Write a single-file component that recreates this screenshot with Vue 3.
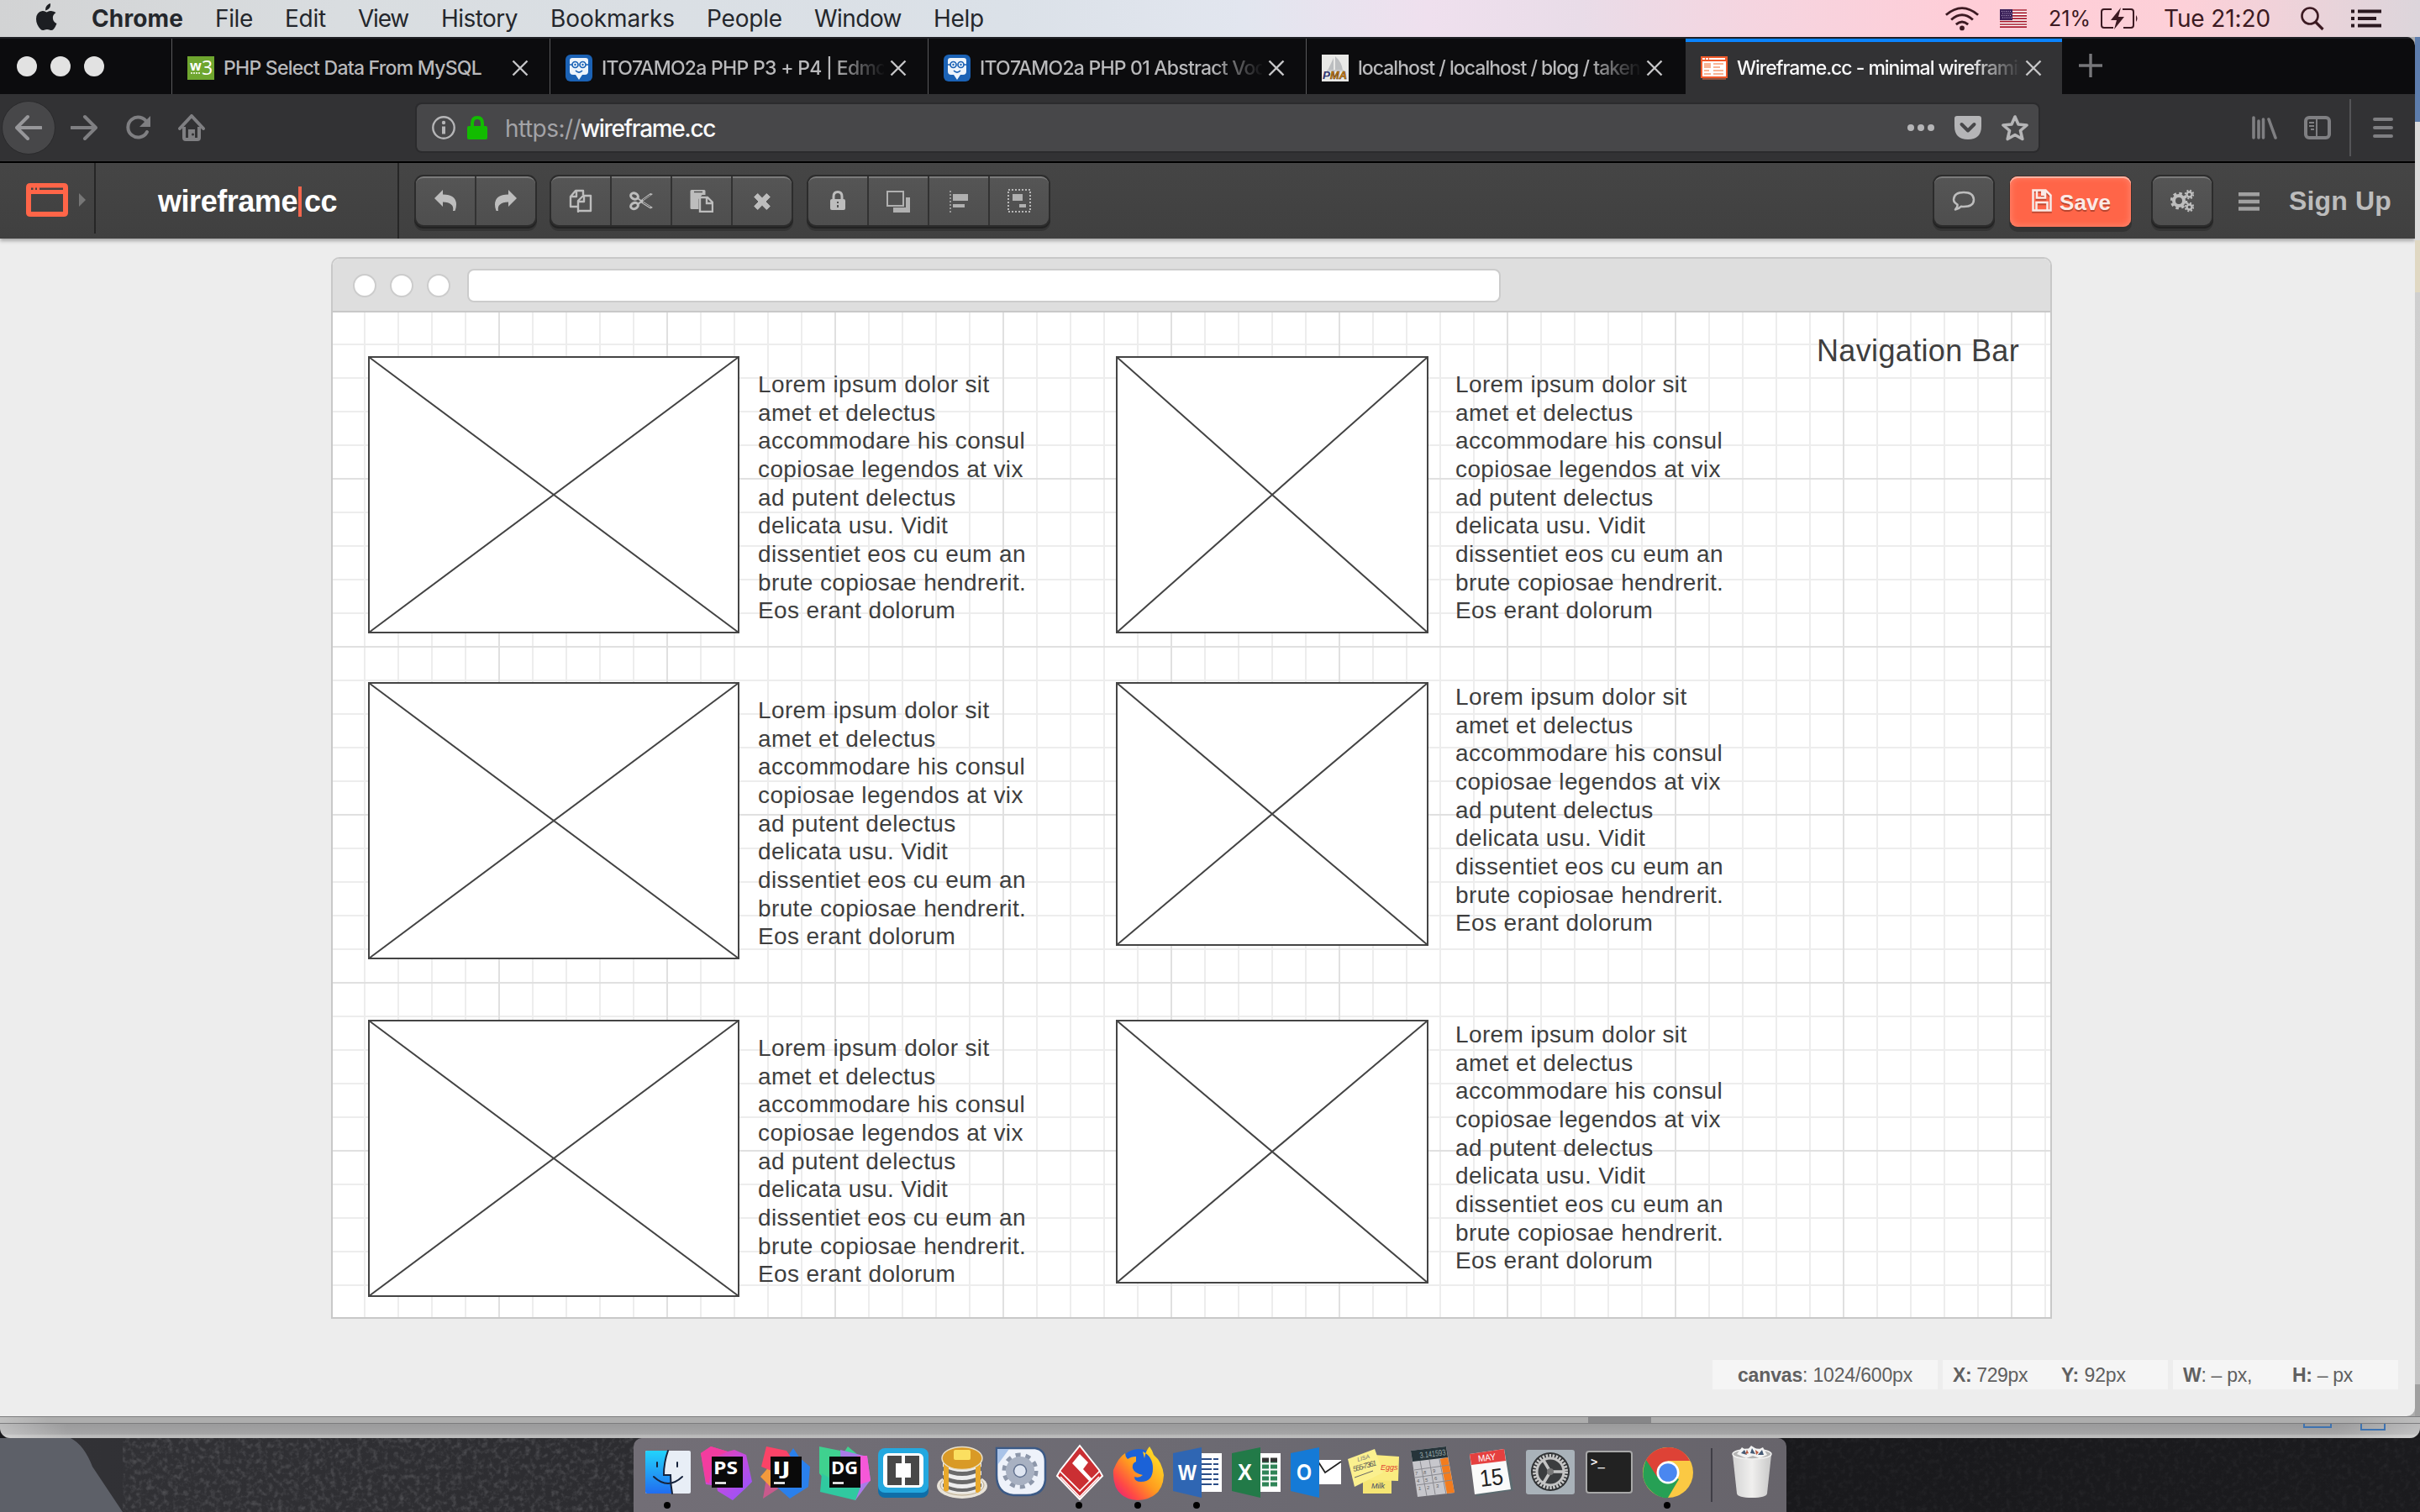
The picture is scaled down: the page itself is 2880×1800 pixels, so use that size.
<script setup>
const spread = (el, target) => {
  el.style.letterSpacing = '0px'
  const natural = el.getBoundingClientRect().width
  const n = el.textContent.length
  if (n && target) el.style.letterSpacing = ((target - natural) / n).toFixed(3) + 'px'
}
const vFit = { mounted: (el, b) => spread(el, b.value) }

const menus = [
  { t: 'File', x: 256, w: 45 }, { t: 'Edit', x: 339, w: 49 }, { t: 'View', x: 426, w: 60 },
  { t: 'History', x: 525, w: 91 }, { t: 'Bookmarks', x: 655, w: 148 }, { t: 'People', x: 841, w: 90 },
  { t: 'Window', x: 969, w: 104 }, { t: 'Help', x: 1111, w: 60 },
].map((m, i, a) => ({ ...m, cell: (a[i + 1]?.x ?? m.x + m.w) - m.x }))

const edmodo = `<rect width="32" height="32" rx="6" fill="#1b62b5"/><path d="M5 7q0-3 3-3h16q3 0 3 3v13q0 4-4 4h-3l-4 6-4-6H9q-4 0-4-4z" fill="#eef4fb"/><g fill="none" stroke="#1b62b5" stroke-width="1.700"><circle cx="11.500" cy="12" r="3.500"/><circle cx="20.500" cy="12" r="3.500"/><path d="M2 12h6M24 12h6M12 19q4 4 8 0"/></g><circle cx="11.500" cy="12" r="1.200" fill="#1b62b5"/><circle cx="20.500" cy="12" r="1.200" fill="#1b62b5"/>`
const tabs = [
  { title: 'PHP Select Data From MySQL', w: 307, icon: `<rect y="2" width="32" height="28" fill="#6fa62f"/><text x="3" y="19" font-family="Open Sans,sans-serif" font-weight="700" font-size="16" fill="#fff">w</text><text x="17" y="24" font-family="Open Sans,sans-serif" font-size="23" fill="#fff">3</text><path d="M4 22h12" stroke="#dcebc8" stroke-width="2" stroke-dasharray="2 1"/>` },
  { title: 'ITO7AMO2a PHP P3 + P4 | Edmodo', w: 366, fade: true, icon: edmodo },
  { title: 'ITO7AMO2a PHP 01 Abstract Vocab', w: 366, fade: true, icon: edmodo },
  { title: 'localhost / localhost / blog / taken', w: 336, fade: true, icon: `<rect width="32" height="32" fill="#e8e8e6"/><path d="M14 4L7 19h7zM16 2v17h9q-1-10-9-17z" fill="#bcbec0"/><path d="M6 19h20" stroke="#ccc" stroke-width="2"/><g font-family="Liberation Sans,sans-serif" font-weight="700" font-style="italic" font-size="12"><text x="1" y="29" textLength="9" lengthAdjust="spacingAndGlyphs" fill="#33366e">P</text><text x="10" y="29" textLength="20" lengthAdjust="spacingAndGlyphs" fill="#e08a10" stroke="#503005" stroke-width=".5">MA</text></g>` },
  { title: 'Wireframe.cc - minimal wireframing', w: 360, fade: true, active: true, icon: `<path d="M2 26h28v4H2z" fill="#8d5340"/><rect y="2" width="32" height="26" fill="#f1592a"/><path d="M2 4h3v2H2zM6 4h3v2H6zM10 4h19v2H10zM2 8h28v18H2z" fill="#fff"/><path d="M4 10h8v6H4zM15 10h12v2H15zM15 14h8v2h-8zM4 18h6v2H4zM15 18h12v2H15zM4 22h8v2H4zM15 22h12v2H15z" fill="#f9b495"/>` },
]

const groups = [
  [
    `<path d="M1 11L11 1v5.500q16 0 16 12 0 4-1.500 7.500h-2.500q2-10-12-10.500V21z" fill="#bdbdbd"/>`,
    `<path d="M27 11L17 1v5.500q-16 0-16 12 0 4 1.500 7.500H5q-2-10 12-10.500V21z" fill="#bdbdbd"/>`,
  ],
  [
    `<g fill="none" stroke="#bdbdbd" stroke-width="2.400" stroke-linejoin="round"><path d="M10 21H2V9l6-7h9v5M9 2v7H2"/><path d="M11 27V14l6-6h9v18H11zM18 8v7h-7"/></g>`,
    `<g fill="none" stroke="#bdbdbd" stroke-width="3"><ellipse cx="6" cy="8.500" rx="4.500" ry="3.500" transform="rotate(25 6 8.500)"/><ellipse cx="6" cy="20" rx="4.500" ry="3.500" transform="rotate(-25 6 20)"/></g><path d="M10 10l4 3 11-8 3 1-12 8.500L28 22l-3 1.500-11-7-4 3-1-2 4-3-4-3z" fill="#bdbdbd"/><path d="M16 13l9-6M16 16l9 5.500" stroke="#525252"/>`,
    `<path d="M2 1h15q1.500 0 1.500 1.500V7h-4l-4 5v12H2q-1.500 0-1.500-1.500v-20Q.5 1 2 1z" fill="#bdbdbd"/><path d="M5 3.500h10" stroke="#525252" stroke-width="1.500"/><path d="M12 27V10h9l6 6v11zM20 10v7h7" fill="#525252" stroke="#bdbdbd" stroke-width="2.400"/>`,
    `<path d="M8.700 5.500L14 10.800l5.300-5.300 4 4-5.300 5.500 5.300 5.500-4 4L14 19.200l-5.300 5.300-4-4L10 15 4.700 9.500z" fill="#bdbdbd" stroke="#bdbdbd" stroke-linejoin="round"/>`,
  ],
  [
    `<path d="M9 14V9q0-5.500 5-5.500T19 9v5" fill="none" stroke="#bdbdbd" stroke-width="3"/><rect x="5" y="12" width="18" height="13" rx="2" fill="#bdbdbd"/><path d="M14 15v2M14 19v3" stroke="#525252" stroke-width="2"/>`,
    `<path d="M23 10h5v18H8v-6h15z" fill="#b0b0b0"/><rect x="1" y="3" width="19" height="17" fill="#525252" stroke="#b0b0b0" stroke-width="2"/>`,
    `<path d="M4 2v26" stroke="#b0b0b0" stroke-width="1.500" stroke-dasharray="2 2"/><path d="M7 6h18v8H7zM7 18h14v4H7z" fill="#b0b0b0"/>`,
    `<rect x="1" y="1" width="26" height="26" fill="none" stroke="#b8b8b8" stroke-width="2" stroke-dasharray="2 2"/><path d="M6 6h12v8H6zM14 18h8v4h-8z" fill="#b0b0b0"/>`,
  ],
]

const lorem = ['Lorem ipsum dolor sit', 'amet et delectus', 'accommodare his consul', 'copiosae legendos at vix', 'ad putent delectus', 'delicata usu. Vidit', 'dissentiet eos cu eum an', 'brute copiosae hendrerit.', 'Eos erant dolorum']
// positions are relative to the sheet's inner corner
const boxes = [
  { x: 42, y: 52, w: 442, h: 330 }, { x: 932, y: 52, w: 372, h: 330 },
  { x: 42, y: 440, w: 442, h: 330 }, { x: 932, y: 440, w: 372, h: 314 },
  { x: 42, y: 842, w: 442, h: 330 }, { x: 932, y: 842, w: 372, h: 314 },
]
const notes = [
  { x: 506, y: 69 }, { x: 1336, y: 69 }, { x: 506, y: 457 }, { x: 1336, y: 441 }, { x: 506, y: 859 }, { x: 1336, y: 843 },
]

const badge = (t, w) => `<rect x="17" y="22" width="37" height="37" fill="#0a0a0a"/><text x="19" y="43" font-family="Open Sans,sans-serif" font-weight="700" font-size="22" textLength="${w}" lengthAdjust="spacingAndGlyphs" fill="#fff">${t}</text><path d="M21 53.500h13" stroke="#fff" stroke-width="2.500"/>`
const dock = [
  { run: true, art: `<defs><linearGradient id="fa" x2="0" y2="1"><stop stop-color="#22d3fb"/><stop offset="1" stop-color="#216df0"/></linearGradient></defs><rect x="8" y="15" width="54" height="51" rx="2" fill="#e8eef6"/><path d="M8 17q0-2 2-2h25q-5 14-5 29h8q0 12 2 22H10q-2 0-2-2z" fill="url(#fa)"/><path d="M35 15q-5 14-5 29h8q0 12 2 22M22 29v5M46 29v5M18 46q17 16 34 0" fill="none" stroke="#16233c" stroke-width="2" stroke-linecap="round"/>` },
  { art: `<defs><linearGradient id="ps" x2="1" y2="1"><stop stop-color="#ff3a8c"/><stop offset=".5" stop-color="#c44be0"/><stop offset="1" stop-color="#8f55ff"/></linearGradient></defs><path d="M4 18l12-8 20 6 8-2 14 6 7 32-9 9-14 13-18-11-1-6-13-2z" fill="url(#ps)"/><path d="M4 18l12-8 20 6-18 8-4 30-4-2z" fill="#f33c9f"/>${badge('PS', 29)}` },
  { art: `<path d="M12 48l30 2-34 22z" fill="#c85a8c"/><path d="M5 46l12-14v26z" fill="#f39a3c"/><path d="M36 24l8-12 8 12 12 10-2 24-22 14-16-14z" fill="#2a80ec"/><path d="M6 34l6-24 24 5 8 12-26 12z" fill="#fb4367"/>${badge('IJ', 22)}` },
  { art: `<path d="M5 10l30 6 4-6 12 10-30 40-16-18z" fill="#3fd18f"/><path d="M30 14l32 8 4 28-18 24-16-14z" fill="#a97be8"/><path d="M50 21l12 0 4 30-12 4z" fill="#f558d8"/><path d="M8 42l10 6 36 10-6 16-42-10z" fill="#30c9a0"/>${badge('DG', 32)}` },
  { art: `<rect x="5" y="15" width="60" height="56" rx="8" fill="#0f6ea8"/><rect x="5" y="12" width="60" height="53" rx="8" fill="#23a8df"/><rect x="11" y="18" width="48" height="41" rx="6" fill="#fff"/><path d="M16 23h17v9h-7v17h7v9H16zM37 23h17v35H37v-9h7V32h-7z" transform="translate(0 -2)" fill="#484848"/>` },
  { art: `<ellipse cx="35" cy="57" rx="30" ry="15" fill="#e9e4da"/><ellipse cx="35" cy="56" rx="26" ry="12" fill="none" stroke="#b9a98a"/><path d="M12 24h46v32q0 9-23 9t-23-9z" fill="#eee"/><path d="M12 34q23 12 46 0v5q-23 12-46 0zM12 44q23 12 46 0v5q-23 12-46 0zM12 54q23 12 46 0v4q-23 12-46 0z" fill="#6a6a6a"/><path d="M13 28v34q4 3 6 0V32zM51 32v32q3 3 6-2V28z" fill="#e9a92c"/><ellipse cx="35" cy="24" rx="24" ry="13.500" fill="#d99a26" stroke="#e8dfc9" stroke-width="1.500"/><rect x="25" y="14" width="20" height="12" rx="2" fill="#fbdf60"/>` },
  { art: `<path d="M6 12h46q12 2 12 16v22q-2 18-22 18H26Q6 66 6 44z" fill="#eef2fa" stroke="#3c5a86" stroke-width="2.500"/><path d="M7 13h14L7 32z" fill="#a9c3e8"/><circle cx="34" cy="39" r="19" fill="none" stroke="#8d97aa" stroke-width="5" stroke-dasharray="6 5.940"/><circle cx="34" cy="39" r="12.500" fill="none" stroke="#a8b1c2" stroke-width="9"/><circle cx="34" cy="39" r="7.500" fill="#dfe6f2" stroke="#5f6f8d" stroke-width="1.500"/>` },
  { run: true, art: `<path d="M35 9l23 29 4 7-27 28L8 45l4-7z" fill="#cb2f33" stroke="#fff" stroke-width="2"/><path d="M11 39l24 24 24-24M12 46l23 24 23-24" fill="none" stroke="#fff" stroke-width="1.600"/><path d="M35 19l10 10-6 8 11 12-3 3-21-22z" fill="#fff"/>` },
  { run: true, art: `<defs><linearGradient id="ffx" x1="1" y1="0" x2="0" y2="1"><stop offset=".1" stop-color="#ffe226"/><stop offset=".5" stop-color="#ff9a1f"/><stop offset=".75" stop-color="#ff4a45"/><stop offset="1" stop-color="#e3128a"/></linearGradient></defs><circle cx="35" cy="36" r="23" fill="#1b62d8"/><path d="M40 16q12 6 12 20 0 16-14 16-8 0-8-6 6 2 10-2-10-2-12-8-1-6 4-8V22q-6 0-10 3-3-3-3-7-8 5-14 20-2 34 29 36 30-2 31-30-2-16-12-24-2-6-5-10-5 6-6 14z" fill="url(#ffx)"/>` },
  { run: true, art: `<rect x="34" y="18" width="30" height="46" fill="#fff"/><path d="M40 25h20M40 31h20M40 37h20M40 43h20M40 49h20M40 55h20" stroke="#2b4d86" stroke-width="2" stroke-dasharray="12 2"/><path d="M6 18l34-7v60L6 63z" fill="#2f66b3"/><text x="12" y="50" font-family="Liberation Sans,sans-serif" font-weight="700" font-size="25" textLength="22" lengthAdjust="spacingAndGlyphs" fill="#fff">W</text>` },
  { art: `<rect x="34" y="18" width="30" height="46" fill="#fff"/><path d="M42 27h18M42 34h18M42 41h18M42 48h18M42 55h18" stroke="#2f8457" stroke-width="5" stroke-dasharray="8 2"/><path d="M42 26h18" stroke="#333" stroke-width="5" stroke-dasharray="8 2"/><path d="M6 18l34-7v60L6 63z" fill="#227a48"/><text x="13" y="50" font-family="Liberation Sans,sans-serif" font-weight="700" font-size="28" textLength="17" lengthAdjust="spacingAndGlyphs" fill="#fff">X</text>` },
  { art: `<path d="M38 26h28v29H38z" fill="#fff"/><path d="M38 27l9 14 19-13" fill="none" stroke="#222" stroke-width="1.800"/><path d="M6 18l34-7v60L6 63z" fill="#157ad6"/><text x="13" y="50" font-family="Liberation Sans,sans-serif" font-weight="700" font-size="27" textLength="18" lengthAdjust="spacingAndGlyphs" fill="#fff">O</text>` },
  { art: `<path d="M22 38h34v28H22z" fill="#f5e574"/><path d="M35 20l30 2-1 29-34-1z" fill="#faec80"/><path d="M4 25l32-12 10 28-34 17z" fill="#fbf08f"/><g font-family="Liberation Sans,sans-serif" font-style="italic"><text x="11" y="40" font-size="9" textLength="29" fill="#555" transform="rotate(-16 11 40)">555-7361</text><text x="16" y="28" font-size="7" fill="#777" transform="rotate(-16 16 28)">LISA</text><text x="43" y="38" font-size="9" fill="#e04030">Eggs</text><text x="32" y="60" font-size="9" fill="#444a66">Milk</text></g><path d="M12 47l22-8" stroke="#666"/>` },
  { art: `<path d="M9 15l42-5 10 55-44 5z" fill="#c7c7cc"/><path d="M9 15l42-5 2 13-42 5z" fill="#26343a"/><path d="M44 25l9-2 8 42-9 1z" fill="#f27c1e"/><path d="M13 38l42-6M14 47l42-6M16 56l42-6M20 27l8 42M31 26l7 41M43 25l8 42" stroke="#8a8a90"/><text x="20" y="24" font-family="Liberation Sans,sans-serif" font-size="10" textLength="31" lengthAdjust="spacingAndGlyphs" fill="#9aa" transform="rotate(-7 20 24)">3.141593</text><g font-family="Liberation Sans,sans-serif" font-size="6" fill="#666"><text x="14" y="44">7</text><text x="24" y="43">8</text><text x="35" y="41">9</text><text x="16" y="53">4</text><text x="26" y="52">5</text><text x="37" y="50">6</text><text x="18" y="62">1</text><text x="28" y="61">2</text><text x="39" y="59">3</text></g>` },
  { art: `<path d="M11 20l42-6 8 48-44 7z" fill="#5c6b70"/><path d="M9 19l41-6 8 48-43 6z" fill="#fafafa"/><path d="M9 19l41-6 2 14-41 5z" fill="#e5403f"/><g font-family="Liberation Sans,sans-serif" transform="rotate(-7 30 40)"><text x="21" y="27" font-size="11" textLength="21" lengthAdjust="spacingAndGlyphs" fill="#fff">MAY</text><text x="20" y="57" font-size="28" textLength="28" lengthAdjust="spacingAndGlyphs" fill="#222">15</text></g>` },
  { art: `<rect x="6" y="14" width="58" height="53" rx="3" fill="#a9b2b9"/><circle cx="35" cy="40" r="23" fill="#2f3133"/><circle cx="35" cy="40" r="19" fill="none" stroke="#c9c9c9" stroke-width="4" stroke-dasharray="2.500 1.480"/><circle cx="35" cy="40" r="16" fill="#3b3d3f" stroke="#c4c4c4" stroke-width="3"/><path d="M35 40h17M35 40l-9-15M35 40l-9 15" stroke="#c4c4c4" stroke-width="3.500"/><circle cx="35" cy="40" r="4" fill="#777"/>` },
  { art: `<rect x="8" y="16" width="54" height="49" rx="3" fill="#222" stroke="#a8a8a8" stroke-width="2"/><text x="13" y="33" font-family="DejaVu Sans Mono,monospace" font-weight="700" font-size="14" fill="#f2f2f2">&gt;_</text>` },
  { run: true, art: `<circle cx="35" cy="41" r="30" fill="#fbc943"/><path d="M35 41L9 26Q-2 52 20 67q8 5 15 4l13-22z" fill="#26a055"/><path d="M9 26q8-14 26-15 18 0 26 16H35L22 46z" fill="#de4236"/><circle cx="35" cy="41" r="13.500" fill="#fff"/><circle cx="35" cy="41" r="10.800" fill="#4a87f0"/>` },
]
const trash = `<defs><linearGradient id="tr"><stop stop-color="#d4d4d4"/><stop offset=".5" stop-color="#f0efee"/><stop offset="1" stop-color="#c8c8c8"/></linearGradient></defs><path d="M12 20l46 0-5 46q-1 5-18 5t-18-5z" fill="url(#tr)"/><ellipse cx="35" cy="19" rx="23" ry="6" fill="#b5b5b5" stroke="#f2f2f2" stroke-width="1.500"/><path d="M17 19l6-8 6 4 5-6 8 5 6-3 5 9-9 4-8-3-8 3z" fill="#f3f3f3"/><path d="M22 18l4-4 3 6zM33 18l2-6 4 7zM42 20l5-6 2 6z" fill="#455a75"/><path d="M39 14l4 3-3 3zM29 14l2 4-4 1z" fill="#b85a40"/>`
</script>

<template>
  <div class="desktop">
    <header class="menubar">
      <svg class="apple" viewBox="0 0 26 34" width="26" height="34"><path d="M18 1q.5 4.500-2 6.500T12 9.500Q11.500 6 13.700 3.700 15.500 1.500 18 1zM24.500 12q-4 2.600-3.600 6.800.4 4.600 4.600 6.200-1.500 4-3.500 6.500-2 2.200-4.500 1.300-3.500-1.600-7 0-2.300.9-4.500-1.300Q1 26 1 19.500 1.300 11 8.500 10q2 0 5 1.400 3-1.400 5.300-1.400 3.700.3 5.700 2z" fill="#1c1e22" /></svg>
      <div class="app"><b v-fit="109">Chrome</b></div>
      <div v-for="m in menus" :key="m.t" :style="{ width: m.cell + 'px' }"><span v-fit="m.w">{{ m.t }}</span></div>
      <div class="extras">
        <svg class="wifi" width="42" height="29" viewBox="0 0 44 30"><g fill="none" stroke="#3c1a22" stroke-width="3"><path d="M2 10Q22-7 42 10" /><path d="M8.500 16Q22 4 35.500 16" /><path d="M14.500 22Q22 15.500 29.500 22" /></g><circle cx="22" cy="26.500" r="3" fill="#3c1a22" /></svg>
        <svg class="flag" width="32" height="22" viewBox="0 0 32 22"><path fill="#fff" d="M0 0h32v22H0z" /><path d="M0 1h32M0 4.400h32M0 7.800h32M0 11.200h32M0 14.600h32M0 18h32M0 21.200h32" stroke="#a8182c" stroke-width="1.700" /><path fill="#3b2159" d="M0 0h15v13H0z" /><path d="M2 2.500h12M3 5h11M2 7.500h12M3 10h11" stroke="#b9a6c9" stroke-dasharray="1 1.500" /></svg>
        <span class="pct" v-fit="50">21%</span>
        <svg class="batt" width="46" height="26" viewBox="0 0 46 26"><path d="M14 2H5Q2 2 2 5v16q0 3 3 3h11M27 2h10q3 0 3 3v16q0 3-3 3h-9" fill="none" stroke="#3c1a22" stroke-width="2" /><path d="M43 9q3 4 0 8zM25 0L13 15h7l-3 11 12-15h-7z" fill="#3c1a22" /></svg>
        <span class="clock" v-fit="127">Tue 21:20</span>
        <svg class="find" width="30" height="30" viewBox="0 0 30 30"><circle cx="12" cy="12" r="9.500" fill="none" stroke="#3c1a22" stroke-width="2.600" /><path d="M18.500 19l9 9" stroke="#3c1a22" stroke-width="3.200" /></svg>
        <svg width="36" height="22" viewBox="0 0 36 22"><path d="M0 2.500h4M8 2.500h28M0 11h4M8 11h22M0 19.500h4M8 19.500h28" stroke="#2a1820" stroke-width="4" /></svg>
      </div>
    </header>

    <div class="stage">
      <main class="window">
        <nav class="tabs">
          <div class="lights"><i></i><i></i><i></i></div>
          <div v-for="t in tabs" :key="t.title" class="tab" :class="{ active: t.active }">
            <svg width="32" height="32" viewBox="0 0 32 32" v-html="t.icon"></svg>
            <div class="title" :class="{ fade: t.fade }"><span v-fit="t.w">{{ t.title }}</span></div>
            <svg width="20" height="20" viewBox="0 0 20 20"><path d="M1.500 1.500l17 17M18.500 1.500l-17 17" stroke="#c6c6c8" stroke-width="2.400" /></svg>
          </div>
          <svg class="plus" width="28" height="28" viewBox="0 0 28 28"><path d="M14 0v28M0 14h28" stroke="#77777a" stroke-width="3.400" /></svg>
        </nav>

        <div class="navbar">
          <div class="back"><svg width="32" height="32" viewBox="0 0 32 32"><path d="M31 16H3M15 3L2 16l13 13" fill="none" stroke="#97979a" stroke-width="4" stroke-linecap="round" stroke-linejoin="round" /></svg></div>
          <svg class="ic fwd" viewBox="0 0 32 32"><path d="M1 16h28M17 3l13 13-13 13" fill="none" stroke="#7f7f82" stroke-width="4" stroke-linecap="round" stroke-linejoin="round" /></svg>
          <svg class="ic rel" viewBox="0 0 32 32"><path d="M26 21a12 12 0 1 1 0-11" fill="none" stroke="#7f7f82" stroke-width="4" stroke-linecap="round" /><path d="M30 2v13H17z" fill="#7f7f82" /></svg>
          <svg class="ic home" viewBox="0 0 32 32"><path d="M2 17L16 2l14 15" fill="none" stroke="#7f7f82" stroke-width="4" stroke-linecap="round" stroke-linejoin="round" /><path d="M7 15v13q0 2 2 2h14q2 0 2-2V15" fill="none" stroke="#7f7f82" stroke-width="4" /><path d="M12 18h8v12h-8z" fill="#7f7f82" /><circle cx="17.500" cy="24" r="1.500" fill="#323234" /></svg>
          <div class="url">
            <svg class="info" width="28" height="28" viewBox="0 0 28 28"><circle cx="14" cy="14" r="12.700" fill="none" stroke="#b5b5b7" stroke-width="2.400" /><circle cx="14" cy="8" r="2.200" fill="#b5b5b7" /><path d="M14 12.500v9" stroke="#b5b5b7" stroke-width="4" /></svg>
            <svg class="lock" width="24" height="28" viewBox="0 0 24 28"><path d="M6 13V9q0-7 6-7t6 7v4" fill="none" stroke="#12bc00" stroke-width="4" /><rect y="12" width="24" height="16" rx="2" fill="#12bc00" /></svg>
            <span class="scheme" v-fit="90">https://</span><span class="host" v-fit="160">wireframe.cc</span>
            <div class="acts">
              <svg width="32" height="8" viewBox="0 0 32 8"><g fill="#b5b5b7"><circle cx="4" cy="4" r="4" /><circle cx="16" cy="4" r="4" /><circle cx="28" cy="4" r="4" /></g></svg>
              <svg width="32" height="28" viewBox="0 0 32 28"><path d="M3 0h26q3 0 3 3v9q0 16-16 16T0 12V3q0-3 3-3z" fill="#b5b5b7" /><path d="M8.500 10l7.500 7.500 7.500-7.500" fill="none" stroke="#474749" stroke-width="4" stroke-linecap="round" stroke-linejoin="round" /></svg>
              <svg width="32" height="32" viewBox="0 0 32 32"><path d="M16 3l4 9 10 1-7.500 6.500 2.300 10L16 24.500l-8.800 5 2.300-10L2 13l10-1z" fill="none" stroke="#b5b5b7" stroke-width="3.600" stroke-linejoin="round" /></svg>
            </div>
          </div>
          <div class="tools">
            <svg width="30" height="28" viewBox="0 0 30 28"><path d="M2 2v24M8 6v20M13.500 4v22M20 4l8 22" stroke="#7f7f82" stroke-width="3.600" stroke-linecap="round" /></svg>
            <svg width="32" height="28" viewBox="0 0 32 28"><rect x="2" y="2" width="28" height="24" rx="4" fill="none" stroke="#7f7f82" stroke-width="4" /><path d="M15 2v24M6 8h6M6 12h6M8 16h4" stroke="#7f7f82" stroke-width="2" /></svg>
            <i class="bar"></i>
            <svg width="24" height="24" viewBox="0 0 24 24"><path d="M2 2h20M2 12h20M2 22h20" stroke="#7f7f82" stroke-width="4" stroke-linecap="round" /></svg>
          </div>
        </div>

        <div class="toolbar">
          <div class="kind">
            <svg width="50" height="40" viewBox="0 0 50 40"><path fill-rule="evenodd" fill="#ff6548" d="M5 0h40q5 0 5 5v30q0 5-5 5H5q-5 0-5-5V5Q0 0 5 0zM6 13v21h38V13zM6 5.500v2.500h2.500V5.500zM11 5.500v2.500h2V5.500zM16 5.500v2.500h28V5.500z" /></svg>
            <svg width="8" height="16" viewBox="0 0 8 16"><path d="M0 0l8 8-8 8z" fill="#767676" /></svg>
          </div>
          <div class="brand"><span v-fit="166">wireframe</span><i></i><span v-fit="39">cc</span></div>
          <div v-for="(g, i) in groups" :key="i" class="group">
            <button v-for="(b, j) in g" :key="j"><svg width="28" height="28" viewBox="0 0 28 28" v-html="b"></svg></button>
          </div>
          <div class="right">
            <div class="group"><button><svg width="28" height="28" viewBox="0 0 28 28"><path d="M14 4q11.500 0 12 8.500Q26 21 14 21q-2 0-3-.3Q8 24 4 24.500q3-3 2.500-6Q2 16 2 12.500 2.500 4 14 4z" fill="none" stroke="#bdbdbd" stroke-width="2.500" stroke-linejoin="round" /></svg></button></div>
            <div class="save">
              <svg width="24" height="28" viewBox="0 0 24 28"><path d="M1.500 1.500h15l6 6v18h-21zM6 1.500v9h10v-9M5.500 25v-9h13v9" fill="none" stroke="#fbeae6" stroke-width="2.600" /><path d="M11 2h4v6h-4z" fill="#fbeae6" /></svg>
              <b v-fit="61">Save</b>
            </div>
            <div class="group gears"><button><svg width="28" height="28" viewBox="0 0 28 28"><g fill="none" stroke="#bdbdbd"><circle cx="10" cy="14" r="6" stroke-width="4" /><circle cx="10" cy="14" r="8.800" stroke-width="3" stroke-dasharray="3.600 3.310" /><circle cx="22.500" cy="6.500" r="3" stroke-width="2.400" /><circle cx="22.500" cy="6.500" r="4.800" stroke-width="2" stroke-dasharray="2 1.770" /><circle cx="22.500" cy="21.500" r="3" stroke-width="2.400" /><circle cx="22.500" cy="21.500" r="4.800" stroke-width="2" stroke-dasharray="2 1.770" /></g></svg></button></div>
            <svg class="burger" width="25" height="22" viewBox="0 0 25 22"><path d="M0 2.300h25M0 11h25M0 19.500h25" stroke="#a0a0a0" stroke-width="4.400" /></svg>
            <b class="signup" v-fit="122">Sign Up</b>
          </div>
        </div>

        <section class="work">
          <div class="frame">
            <div class="chrome"><i></i><i></i><i></i><div class="addr"></div></div>
            <div class="sheet">
              <svg v-for="(b, i) in boxes" :key="'b' + i" class="item" :width="b.w" :height="b.h" :style="{ left: b.x + 'px', top: b.y + 'px' }">
                <rect x="1" y="1" :width="b.w - 2" :height="b.h - 2" fill="#fff" stroke="#444" stroke-width="2" />
                <path :d="`M1 1L${b.w - 1} ${b.h - 1}M${b.w - 1} 1L1 ${b.h - 1}`" stroke="#444" stroke-width="2" />
              </svg>
              <div v-for="(n, i) in notes" :key="'n' + i" class="item note" :style="{ left: n.x + 'px', top: n.y + 'px' }">
                <div v-for="l in lorem" :key="l">{{ l }}</div>
              </div>
              <div class="item nav"><span v-fit="241">Navigation Bar</span></div>
            </div>
          </div>
          <footer class="status">
            <div class="s1"><span v-fit="208"><b>canvas</b>: 1024/600px</span></div>
            <div class="s2"><span v-fit="89"><b>X:</b> 729px</span><span v-fit="77"><b>Y:</b> 92px</span></div>
            <div class="s3"><span v-fit="82"><b>W</b>: – px,</span><span v-fit="72"><b>H:</b> – px</span></div>
          </footer>
        </section>
      </main>
      <div class="edge"></div>
    </div>

    <div class="under one"><i></i></div>
    <div class="under two"><i class="a"></i><i class="b"></i></div>

    <div class="wallpaper">
      <svg class="grain" width="2880" height="88"><defs><filter id="n" x="0" y="0" width="100%" height="100%"><feTurbulence type="fractalNoise" baseFrequency=".16" numOctaves="3" seed="4" /><feColorMatrix values="0 0 0 0 .6  0 0 0 0 .6  0 0 0 0 .63  1.600 0 0 0 -.72" /></filter></defs><path d="M0 0h84q16 8 26 34l36 54H0z" fill="#5d6068" /><rect x="146" width="608" height="88" filter="url(#n)" opacity=".28" /><rect x="2126" width="754" height="88" filter="url(#n)" opacity=".08" /></svg>
      <div class="dock">
        <div v-for="(d, i) in dock" :key="i" class="slot"><svg width="70" height="88" viewBox="0 0 70 88" v-html="d.art"></svg><i v-if="d.run"></i></div>
        <div class="sep"></div>
        <div class="slot"><svg width="70" height="88" viewBox="0 0 70 88" v-html="trash"></svg></div>
      </div>
    </div>
  </div>
</template>

<style>
body { margin: 0; overflow: hidden; }
</style>
<style scoped>
* { box-sizing: border-box; }
svg { display: block; flex: none; }
span, b { white-space: nowrap; }
.desktop { width: 2880px; height: 1800px; display: flex; flex-direction: column; overflow: hidden; background: #19191c; font-family: Inter, "Liberation Sans", sans-serif; }
.menubar { height: 44px; flex: none; display: flex; align-items: center; padding-left: 42px; font-size: 28px; color: #24272c; background: linear-gradient(90deg, #d2d3d4 0, #d9dde0 400px, #dbe1e8 1200px, #e2e6ef 1480px, #efe0ee 1700px, #e9dce8 1880px, #f5d5e0 2080px, #ffcdd7 2350px, #fdd0d8 2600px, #dcd5db 2880px); }
.apple { margin-top: -4px; }
.app { width: 147px; margin-left: 41px; flex: none; }
.app b { font-weight: 700; }
.extras { margin-left: auto; display: flex; align-items: center; color: #3c1a22; padding-right: 46px; }
.flag { margin-left: 24px; }
.pct { margin-left: 26px; font-size: 25px; }
.batt { margin-left: 11px; }
.clock { margin-left: 30px; }
.find { margin: 0 31px 0 35px; }

.stage { height: 1642px; flex: none; display: flex; background: #adadad; }
.window { width: 2874px; display: flex; flex-direction: column; background: #ededed; border-radius: 0 10px 10px 0; overflow: hidden; }
.edge { width: 6px; background: linear-gradient(#5d7dad 0, #5d7dad 101px, #dcdcdc 101px, #dcdcdc 242px, #e0d8c2 242px, #e0d8c2 304px, #cfcfcf 304px, #c4c4c4 1604px, #a0a0a0 1604px); }
.tabs { height: 68px; flex: none; display: flex; background: #0c0c0e; border-top: 2px solid #1f2025; }
.lights { width: 204px; display: flex; align-items: center; gap: 16px; padding-left: 20px; }
.lights i { width: 24px; height: 24px; border-radius: 50%; background: #e2e2e2; }
.tab { width: 450px; display: flex; align-items: center; padding: 3px 24px 0 18px; border-left: 1px solid #59595b; color: #b9b9bb; font-size: 23px; font-weight: 500; }
.tab.active { background: #323234; color: #f9f9fa; border-top: 4px solid #0a84ff; border-left: 0; margin: 0 0 0 2px; width: 448px; padding-top: 0; }
.title { width: 336px; margin: 0 7px 0 11px; overflow: hidden; line-height: 34px; }
.fade { -webkit-mask-image: linear-gradient(90deg, #000 276px, transparent 338px); mask-image: linear-gradient(90deg, #000 276px, transparent 338px); }
.plus { margin: 18px 0 0 20px; }

.navbar { height: 80px; flex: none; display: flex; align-items: center; background: #323234; }
.back { width: 64px; height: 64px; margin-left: 2px; border-radius: 50%; display: flex; align-items: center; justify-content: center; background: #474749; border: 1px solid #2a2a2c; }
.ic { width: 32px; height: 32px; }
.fwd { margin-left: 18px; }
.rel { margin-left: 33px; }
.home { margin-left: 31px; }
.url { margin-left: 252px; width: 1930px; height: 56px; border-radius: 6px; background: #474749; box-shadow: 0 0 0 2px #2b2b2d; display: flex; align-items: center; padding: 0 12px 0 18px; font-size: 28px; }
.lock { margin-left: 14px; }
.scheme { margin-left: 21px; margin-top: 2px; color: #a3a3a7; }
.host { margin-top: 2px; color: #f9f9fa; font-weight: 500; }
.acts { margin-left: auto; display: flex; align-items: center; gap: 24px; }
.tools { margin-left: auto; display: flex; align-items: center; padding-right: 26px; gap: 0; }
.tools svg + svg { margin-left: 32px; }
.bar { width: 2px; height: 68px; background: #555558; margin: 0 26px 0 22px; }

.toolbar { height: 92px; flex: none; display: flex; background: linear-gradient(#454545, #404040); border-top: 2px solid #000; position: relative; z-index: 1; box-shadow: 0 3px 4px #aaa; font-family: "Liberation Sans", Arial, sans-serif; }
.kind { width: 114px; height: 84px; border-right: 2px solid #262626; display: flex; align-items: center; padding: 4px 0 0 31px; gap: 13px; }
.brand { width: 361px; border-right: 2px solid #262626; display: flex; align-items: center; padding-left: 74px; padding-top: 2px; color: #fff; font-size: 36px; font-weight: 700; }
.brand i { width: 4px; height: 36px; background: #f2654d; margin: 0 3px 0 1px; }
.group { margin: 16px 0 0 19.500px; height: 58px; display: flex; border-radius: 9px; background: #323232; gap: 2px; box-shadow: 0 0 0 2px #2c2c2c, 0 2px 0 2px #222, 0 5px 0 2px #343434; }
button { width: 70px; height: 58px; padding: 0 0 2px; border: 0; border-top: 2px solid #7b7b7b; background: linear-gradient(#555, #4e4e4e); display: flex; align-items: center; justify-content: center; }
button:first-child { border-radius: 9px 0 0 9px; }
button:last-child { border-radius: 0 9px 9px 0; }
button:only-child { border-radius: 9px; }
.right { margin-left: auto; display: flex; padding-right: 28px; }
.save { width: 144px; height: 60px; margin: 16px 0 0 20px; border-radius: 9px; background: #ff6548; display: flex; align-items: center; padding-left: 26px; gap: 9px; color: #fbeae6; font-size: 26px; box-shadow: inset 0 2px 0 #ffb3a2, inset 0 0 8px #ff8f78, 0 0 0 1px #3a302e, 0 5px 0 1px #333; text-shadow: 0 2px 0 #b9452f; }
.save b { margin-top: 2px; }
.save svg { margin-top: -2px; filter: drop-shadow(0 2px 0 #c04a33); }
.gears { margin-left: 26px; }
.burger { margin: 35px 0 0 32px; }
.signup { margin: 27px 0 0 35px; font-size: 32px; line-height: 36px; color: #bcbcbc; }

.work { flex: 1; padding: 22px 0 0 394px; font-family: "Liberation Sans", Arial, sans-serif; }
.frame { width: 2048px; height: 1264px; border: 2px solid #c8c8c8; border-radius: 10px 10px 0 0; background: #fff; overflow: hidden; display: flex; flex-direction: column; }
.chrome { height: 64px; flex: none; background: #dedede; border-bottom: 2px solid #c8c8c8; display: flex; align-items: center; padding-left: 24px; padding-top: 2px; gap: 16px; }
.chrome i { width: 28px; height: 28px; border-radius: 50%; background: #fff; border: 2px solid #ccc; }
.addr { width: 1230px; height: 40px; margin-left: 4px; background: #fff; border: 2px solid #ccc; border-radius: 8px; }
.sheet { flex: 1; position: relative; background-color: #fff; background-image: linear-gradient(90deg, transparent 197px, #e0e0e0 197px, #e0e0e0 199px, transparent 199px), linear-gradient(transparent 197px, #e0e0e0 197px, #e0e0e0 199px, transparent 199px), linear-gradient(90deg, transparent 37px, #ededed 37px, #ededed 39px, transparent 39px), linear-gradient(transparent 37px, #ededed 37px, #ededed 39px, transparent 39px); background-size: 200px 200px, 200px 200px, 40px 40px, 40px 40px; }
.item { position: absolute; }
.note { color: #3e3e3e; font-size: 28px; line-height: 33.670px; letter-spacing: .38px; white-space: nowrap; }
.nav { left: 1766px; top: 25px; font-size: 36px; line-height: 42px; color: #3e3e3e; }
.status { display: flex; gap: 6px; margin: 49px 0 0 1644px; font-size: 23px; color: #606060; }
.status > div { width: 268px; height: 35px; line-height: 37px; background: #f5f5f5; display: flex; }
.s1 { padding-left: 30px; }
.s2 { padding-left: 12px; gap: 40px; }
.s3 { padding-left: 12px; gap: 48px; }

.under { flex: none; border-top: 1px solid #7c7c7e; }
.one { height: 8px; background: linear-gradient(90deg, #c0c0c0, #adadad 60px, #adadad 2800px, #bcbcbc); }
.one i { display: block; width: 75px; height: 7px; margin-left: 1890px; background: #868688; }
.two { height: 18px; display: flex; background: linear-gradient(90deg, #ffffff50, transparent 80px, transparent 2780px, #ffffff50), linear-gradient(#9a9a9b, #a5a5a6 12px, #bbb 14px); border-radius: 0 0 12px 12px; }
.two .a { width: 34px; height: 5px; margin-left: 2741px; border: 2px solid #3f73b0; border-top: 0; }
.two .b { width: 30px; height: 8px; margin-left: 34px; border: 2px solid #3f73b0; border-top: 0; }

.wallpaper { height: 88px; flex: none; position: relative; background: linear-gradient(90deg, #323236, #2c2c30 750px, #19191c 2100px, #1b1b1e); padding-left: 754px; }
.grain { position: absolute; left: 0; top: 0; }
.dock { position: relative; width: 1372px; height: 88px; border-radius: 10px 10px 0 0; background: linear-gradient(90deg, #726e76, #6c6a72 50%, #67646b); padding-left: 6px; display: flex; }
.slot { width: 70px; position: relative; flex: none; }
.slot i { position: absolute; left: 30px; top: 76px; width: 8px; height: 8px; border-radius: 50%; background: #000; }
.sep { width: 2px; height: 64px; margin: 12px 12px 0 16px; background: #3f3e46; flex: none; }
</style>
